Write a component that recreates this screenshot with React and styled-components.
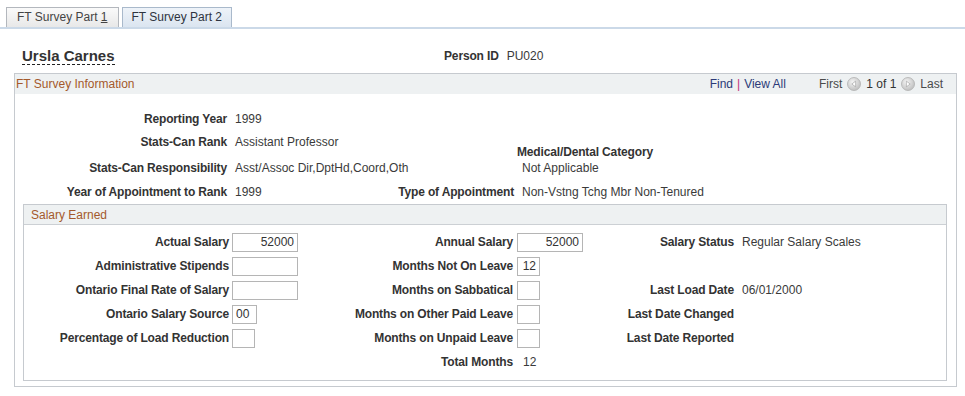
import React from "react";
import styled, { createGlobalStyle } from "styled-components";

const GlobalStyle = createGlobalStyle`
  body {
    margin: 0;
    background: #fff;
    font-family: "Liberation Sans", Arial, sans-serif;
    font-size: 12px;
    color: #333;
  }
`;

const Page = styled.div`
  width: 965px;
  height: 396px;
  overflow: hidden;
`;

const TabStrip = styled.div`
  display: flex;
  gap: 3px;
  padding: 7px 0 0 6px;
  border-bottom: 2px solid #cbd9e8;
`;

const Tab = styled.div`
  height: 20px;
  box-sizing: border-box;
  line-height: 19px;
  padding: 0 ${(p) => (p.$active ? 9 : 10)}px;
  border: 1px solid ${(p) => (p.$active ? "#a9b9cb" : "#b3b7bd")};
  border-bottom: none;
  background: ${(p) =>
    p.$active
      ? "linear-gradient(#eef3f9, #dbe5f0)"
      : "linear-gradient(#fafafa, #e8e8e8)"};
  color: ${(p) => (p.$active ? "#2e3440" : "#444")};
  font-size: 12px;

  u {
    text-decoration: underline;
  }
`;

const HeaderRow = styled.div`
  display: grid;
  grid-template-columns: 422px auto 1fr;
  align-items: center;
  padding: 18px 0 0 22px;
`;

const PersonName = styled.div`
  justify-self: start;
  font-size: 15px;
  font-weight: bold;
  line-height: 17px;
  color: #333;
  border-bottom: 1px dashed #222;
`;

const Label = styled.div`
  font-weight: bold;
  color: #333;
  letter-spacing: -0.15px;
  text-align: ${(p) => p.$align || "right"};
  white-space: nowrap;
`;

const Value = styled.div`
  color: #3a3a3a;
  padding-left: ${(p) => p.$indent ?? 8}px;
  white-space: nowrap;
`;

const Box = styled.div`
  box-sizing: border-box;
  border: 1px solid #c6cacf;
  margin: ${(p) => p.$margin};
  width: ${(p) => p.$width || "auto"};
`;

const BoxHeader = styled.div`
  display: flex;
  align-items: center;
  height: 20px;
  box-sizing: border-box;
  padding: 0 ${(p) => p.$padRight ?? 0}px 0 ${(p) => p.$padLeft}px;
  background: #eef1f2;
  border-bottom: ${(p) => (p.$divider ? "1px solid #ccd0d4" : "none")};
`;

const BoxTitle = styled.div`
  flex: 1;
  color: #a4592c;
  font-size: 12px;
`;

const NavBar = styled.div`
  display: flex;
  align-items: center;
  color: #333;
`;

const NavLink = styled.span`
  color: #2c3a78;
`;

const Separator = styled.span`
  color: #c0307a;
  margin: 0 4px;
`;

const NavText = styled.span`
  color: ${(p) => (p.$muted ? "#4a4a4a" : "#333")};
  margin-left: ${(p) => p.$ml || 0}px;
`;

const NavIcon = styled.svg`
  margin: 0 5px;
  display: block;
`;

const InfoGrid = styled.div`
  display: grid;
  grid-template-columns: 212px 163px 124px 1fr;
  grid-template-rows: 23px 26px 24px 13px;
  line-height: 14px;
  padding-top: 18px;
`;

const StackCell = styled.div`
  align-self: end;
  margin-bottom: 2px;
  padding-left: 3px;
`;

const SalaryGrid = styled.div`
  display: grid;
  grid-template-columns: 205px 95px 189px 101px 120px 1fr;
  grid-template-rows: repeat(6, 24px);
  align-items: center;
  padding: 5px 0 6px;
`;

const Field = styled.div`
  padding-left: ${(p) => p.$indent}px;
`;

const Input = styled.div`
  box-sizing: border-box;
  width: ${(p) => p.$w}px;
  height: 19px;
  line-height: 17px;
  border: 1px solid #b5b5b5;
  background: #fff;
  color: #333;
  padding: 0 3px;
  text-align: ${(p) => p.$align || "left"};
`;

function ArrowIcon({ dir }) {
  const points = dir === "left" ? "8.6,4.2 8.6,9.8 4.8,7" : "5.4,4.2 5.4,9.8 9.2,7";
  return (
    <NavIcon width="14" height="14" viewBox="0 0 14 14">
      <defs>
        <radialGradient id={`g-${dir}`} cx="40%" cy="35%" r="70%">
          <stop offset="0%" stopColor="#f4f4f4" />
          <stop offset="100%" stopColor="#bdbdbd" />
        </radialGradient>
      </defs>
      <circle cx="7" cy="7" r="6.5" fill={`url(#g-${dir})`} stroke="#b0b0b0" strokeWidth="0.8" />
      <polygon points={points} fill="#fff" stroke="#9a9a9a" strokeWidth="0.6" />
    </NavIcon>
  );
}

export default function App() {
  return (
    <Page>
      <GlobalStyle />
      <TabStrip>
        <Tab>
          FT Survey Part <u>1</u>
        </Tab>
        <Tab $active>FT Survey Part 2</Tab>
      </TabStrip>

      <HeaderRow>
        <PersonName>Ursla Carnes</PersonName>
        <Label $align="left">Person ID</Label>
        <Value>PU020</Value>
      </HeaderRow>

      <Box $margin="8px 0 0 14px" $width="943px">
        <BoxHeader $padLeft={1} $padRight={13}>
          <BoxTitle>FT Survey Information</BoxTitle>
          <NavBar>
            <NavLink>Find</NavLink>
            <Separator>|</Separator>
            <NavLink>View All</NavLink>
            <NavText $muted $ml={33}>First</NavText>
            <ArrowIcon dir="left" />
            <NavText>1 of 1</NavText>
            <ArrowIcon dir="right" />
            <NavText $muted>Last</NavText>
          </NavBar>
        </BoxHeader>

        <InfoGrid>
          <Label>Reporting Year</Label>
          <Value>1999</Value>
          <div />
          <div />

          <Label>Stats-Can Rank</Label>
          <Value>Assistant Professor</Value>
          <div />
          <StackCell>
            <Label $align="left">Medical/Dental Category</Label>
          </StackCell>

          <Label>Stats-Can Responsibility</Label>
          <Value>Asst/Assoc Dir,DptHd,Coord,Oth</Value>
          <div />
          <Value>Not Applicable</Value>

          <Label>Year of Appointment to Rank</Label>
          <Value>1999</Value>
          <Label>Type of Appointment</Label>
          <Value>Non-Vstng Tchg Mbr Non-Tenured</Value>
        </InfoGrid>

        <Box $margin="6px 9px 5px 8px">
          <BoxHeader $padLeft={7} $divider>
            <BoxTitle>Salary Earned</BoxTitle>
          </BoxHeader>
          <SalaryGrid>
            <Label>Actual Salary</Label>
            <Field $indent={3}><Input $w={66} $align="right">52000</Input></Field>
            <Label>Annual Salary</Label>
            <Field $indent={4}><Input $w={66} $align="right">52000</Input></Field>
            <Label>Salary Status</Label>
            <Value>Regular Salary Scales</Value>

            <Label>Administrative Stipends</Label>
            <Field $indent={3}><Input $w={66} /></Field>
            <Label>Months Not On Leave</Label>
            <Field $indent={4}><Input $w={23} $align="right">12</Input></Field>
            <div />
            <div />

            <Label>Ontario Final Rate of Salary</Label>
            <Field $indent={3}><Input $w={66} /></Field>
            <Label>Months on Sabbatical</Label>
            <Field $indent={4}><Input $w={23} /></Field>
            <Label>Last Load Date</Label>
            <Value>06/01/2000</Value>

            <Label>Ontario Salary Source</Label>
            <Field $indent={3}><Input $w={25}>00</Input></Field>
            <Label>Months on Other Paid Leave</Label>
            <Field $indent={4}><Input $w={23} /></Field>
            <Label>Last Date Changed</Label>
            <div />

            <Label>Percentage of Load Reduction</Label>
            <Field $indent={3}><Input $w={23} /></Field>
            <Label>Months on Unpaid Leave</Label>
            <Field $indent={4}><Input $w={23} /></Field>
            <Label>Last Date Reported</Label>
            <div />

            <div />
            <div />
            <Label>Total Months</Label>
            <Value $indent={10}>12</Value>
            <div />
            <div />
          </SalaryGrid>
        </Box>
      </Box>
    </Page>
  );
}
